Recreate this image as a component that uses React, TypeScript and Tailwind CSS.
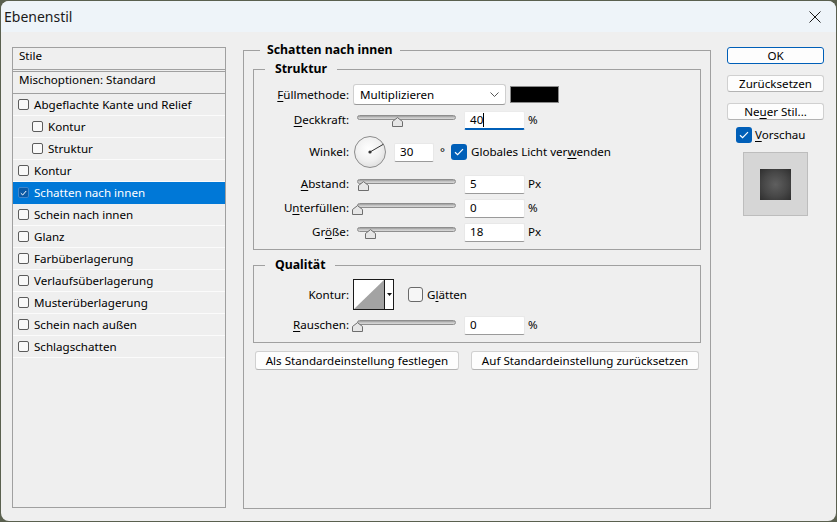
import React from "react";

function U({ children }: { children: React.ReactNode }) {
  return <span className="underline decoration-1 underline-offset-[2px]">{children}</span>;
}

function ListCheck({ selected }: { selected?: boolean }) {
  if (selected) {
    return (
      <div className="w-[11px] h-[11px] rounded-[2px] bg-[#0a5aa6] border border-[#3f86cc] flex items-center justify-center shrink-0">
        <svg width="7" height="6" viewBox="0 0 7 6">
          <path d="M0.8 3.2 L2.7 5 L6.2 1" fill="none" stroke="#ffffff" strokeWidth="1" />
        </svg>
      </div>
    );
  }
  return <div className="w-[11px] h-[11px] rounded-[2px] border border-[#5c5c5c] bg-[#f9f9f9] shrink-0" />;
}

function ListRow({ label, indent, selected }: { label: string; indent?: boolean; selected?: boolean }) {
  const base = "flex items-center h-[22px] border-b";
  const color = selected ? "bg-[#0078d7] text-white border-[#0078d7]" : "border-[#fbfbfb]";
  const pad = indent ? "pl-[19px]" : "pl-[5px]";
  return (
    <div className={`${base} ${color} ${pad}`}>
      <ListCheck selected={selected} />
      <span className="ml-[5px]">{label}</span>
    </div>
  );
}

function BlueCheck() {
  return (
    <div className="w-[16px] h-[16px] rounded-[3px] bg-[#005fb8] flex items-center justify-center shrink-0">
      <svg width="10" height="8" viewBox="0 0 10 8">
        <path d="M1 4.2 L3.6 6.6 L9 1.2" fill="none" stroke="#ffffff" strokeWidth="1.2" />
      </svg>
    </div>
  );
}

function Label({ children }: { children: React.ReactNode }) {
  return <div className="w-[95px] mr-[4px] text-right shrink-0">{children}</div>;
}

function Slider({ pos }: { pos: number }) {
  return (
    <div className="relative w-[107px] h-[24px] shrink-0">
      <div className="absolute left-[4px] right-[4px] top-[7px] h-[5px] rounded-full border border-[#8e8e8e] bg-gradient-to-b from-[#9c9c9c] via-[#c4c4c4] to-[#dadada]" />
      <svg className="absolute top-[9px]" style={{ left: 4 + pos - 5.5 }} width="11" height="10" viewBox="0 0 11 10">
        <path d="M0.5 9.5 L0.5 4.5 L5.5 0.6 L10.5 4.5 L10.5 9.5 Z" fill="#e6e6e6" stroke="#6e6e6e" strokeWidth="1" />
      </svg>
    </div>
  );
}

function Field({ value, focused, narrow }: { value: string; focused?: boolean; narrow?: boolean }) {
  const w = narrow ? "w-[40px]" : "w-[61px]";
  const b = focused
    ? "border-[#ebebeb] border-b-2 border-b-[#005fb8]"
    : "border-[#e8e8e8] border-b-[#9a9a9a]";
  return (
    <div className={`${w} h-[19px] bg-white border ${b} rounded-[2px] pl-[5px] flex items-center shrink-0`}>
      <span>{value}</span>
      {focused ? <span className="w-px h-[14px] bg-black" /> : null}
    </div>
  );
}

function SliderRow({ label, pos, value, unit, focused }: { label: React.ReactNode; pos: number; value: string; unit: string; focused?: boolean }) {
  return (
    <div className="flex items-center h-[24px]">
      <Label>{label}</Label>
      <Slider pos={pos} />
      <div className="ml-[4px]">
        <Field value={value} focused={focused} />
      </div>
      <span className="ml-[3px]">{unit}</span>
    </div>
  );
}

function Btn({ children, w, primary }: { children: React.ReactNode; w: string; primary?: boolean }) {
  const border = primary ? "border-[#005fb8]" : "border-[#d0d0d0] border-b-[#b3b3b3]";
  return (
    <div className={`${w} h-[17px] bg-[#fdfdfd] border ${border} rounded-[3px] flex items-center justify-center leading-none`}>
      {children}
    </div>
  );
}

export default function App() {
  return (
    <div className="w-[837px] h-[522px] bg-[#5a604f] p-[1px] font-['Noto_Sans','Open_Sans',sans-serif] text-[11.6px] text-black">
      <div className="w-full h-full rounded-[8px] overflow-hidden bg-[#efefef] flex flex-col">
        <div className="h-[31px] bg-[#eef4f9] flex items-center justify-between pl-[3px] pr-[15px] shrink-0">
          <span className="text-[14px] text-[#1a1a1a]">Ebenenstil</span>
          <svg width="12" height="12" viewBox="0 0 12 12">
            <path d="M0.5 0.5 L11.5 11.5 M11.5 0.5 L0.5 11.5" stroke="#1a1a1a" strokeWidth="1" />
          </svg>
        </div>

        <div className="flex items-start pl-[11px] pt-[10px]">
          {/* Left list */}
          <div className="mt-[5px] w-[214px] h-[461px] border border-[#a0a0a0] shrink-0">
            <div className="h-[22px] border-b border-[#a0a0a0] flex items-center pl-[6px] pb-[5px]">Stile</div>
            <div className="h-[2px] border-b border-[#a0a0a0]" />
            <div className="h-[22px] border-b border-[#a0a0a0] flex items-center pl-[6px] pb-[5px]">Mischoptionen: Standard</div>
            <ListRow label="Abgeflachte Kante und Relief" />
            <ListRow label="Kontur" indent />
            <ListRow label="Struktur" indent />
            <ListRow label="Kontur" />
            <ListRow label="Schatten nach innen" selected />
            <ListRow label="Schein nach innen" />
            <ListRow label="Glanz" />
            <ListRow label="Farbüberlagerung" />
            <ListRow label="Verlaufsüberlagerung" />
            <ListRow label="Musterüberlagerung" />
            <ListRow label="Schein nach außen" />
            <ListRow label="Schlagschatten" />
          </div>

          {/* Middle */}
          <fieldset className="ml-[17px] w-[468px] h-[467px] border border-[#a0a0a0] px-[9px] shrink-0">
            <legend className="ml-[7px] px-[7px] font-bold leading-[16px] text-[12.3px]">Schatten nach innen</legend>

            <fieldset className="mt-[3px] border border-[#a0a0a0] pt-[7px] pb-[5px]">
              <legend className="ml-[11px] px-[10px] font-bold leading-[16px] text-[12.3px]">Struktur</legend>

              <div className="flex items-center h-[21px]">
                <Label>
                  <U>F</U>üllmethode:
                </Label>
                <div className="w-[153px] h-[21px] bg-white border border-[#cfcfcf] border-b-[#9a9a9a] rounded-[3px] flex items-center justify-between pl-[6px] pr-[6px] shrink-0">
                  <span>Multiplizieren</span>
                  <svg width="9" height="5" viewBox="0 0 9 5">
                    <path d="M0.5 0.5 L4.5 4.5 L8.5 0.5" fill="none" stroke="#555" strokeWidth="1" />
                  </svg>
                </div>
                <div className="ml-[4px] w-[49px] h-[17px] bg-black border border-[#8a8a8a] shrink-0" />
              </div>

              <div className="mt-[3px]">
                <SliderRow label={<><U>D</U>eckkraft:</>} pos={40} value="40" unit="%" focused />
              </div>

              <div className="flex items-center h-[40px]">
                <Label>Winkel:</Label>
                <div className="relative ml-[1px] w-[32px] h-[32px] rounded-full border border-[#8c8c8c] bg-[radial-gradient(circle_at_45%_40%,#ffffff_0%,#f0f0f0_50%,#d2d2d2_100%)] shrink-0">
                  <svg className="absolute left-0 top-0" width="30" height="30" viewBox="0 0 30 30">
                    <line x1="15" y1="15" x2="28.5" y2="7.2" stroke="#333" strokeWidth="1" />
                    <circle cx="15" cy="15" r="1.6" fill="#333" />
                  </svg>
                </div>
                <div className="ml-[8px]">
                  <Field value="30" narrow />
                </div>
                <span className="ml-[6px]">°</span>
                <div className="ml-[6px]">
                  <BlueCheck />
                </div>
                <span className="ml-[4px]">
                  Globales Licht ver<U>w</U>enden
                </span>
              </div>

              <SliderRow label={<><U>A</U>bstand:</>} pos={6} value="5" unit="Px" />
              <SliderRow label={<>U<U>n</U>terfüllen:</>} pos={0} value="0" unit="%" />
              <SliderRow label={<>Gr<U>ö</U>ße:</>} pos={13.5} value="18" unit="Px" />
            </fieldset>

            <fieldset className="mt-[7px] border border-[#a0a0a0] pt-[6px] pb-[5px]">
              <legend className="ml-[11px] px-[10px] font-bold leading-[16px] text-[12.3px]">Qualität</legend>
              <div className="flex items-center h-[31px]">
                <Label>Kontur:</Label>
                <div className="w-[41px] h-[31px] border border-[#1a1a1a] bg-white flex shrink-0">
                  <svg width="30" height="29" viewBox="0 0 30 29" className="shrink-0">
                    <path d="M0 29 L30 0 L30 29 Z" fill="#a3a3a3" />
                  </svg>
                  <div className="flex-1 border-l border-[#1a1a1a] flex items-center justify-center">
                    <svg width="5" height="3" viewBox="0 0 5 3">
                      <path d="M0 0 L5 0 L2.5 3 Z" fill="#111" />
                    </svg>
                  </div>
                </div>
                <div className="ml-[14px] w-[15px] h-[15px] rounded-[3px] border border-[#6a6a6a] bg-[#f6f6f6] shrink-0" />
                <span className="ml-[4px]">
                  G<U>l</U>ätten
                </span>
              </div>
              <div className="mt-[3px]">
                <SliderRow label={<><U>R</U>auschen:</>} pos={0} value="0" unit="%" />
              </div>
            </fieldset>

            <div className="flex mt-[8px] pl-[2px]">
              <div className="w-[204px] h-[19px] bg-[#fdfdfd] border border-[#d0d0d0] border-b-[#b3b3b3] rounded-[3px] flex items-center justify-center">
                Als Standardeinstellung festlegen
              </div>
              <div className="ml-[12px] w-[228px] h-[19px] bg-[#fdfdfd] border border-[#d0d0d0] border-b-[#b3b3b3] rounded-[3px] flex items-center justify-center">
                Auf Standardeinstellung zurücksetzen
              </div>
            </div>
          </fieldset>

          {/* Right */}
          <div className="ml-[16px] mt-[5px] w-[97px] flex flex-col shrink-0">
            <Btn w="w-[97px]" primary>OK</Btn>
            <div className="mt-[11px]">
              <Btn w="w-[97px]">Zurücksetzen</Btn>
            </div>
            <div className="mt-[11px]">
              <Btn w="w-[97px]">
                Ne<U>u</U>er Stil...
              </Btn>
            </div>
            <div className="mt-[7px] h-[16px] flex items-center pl-[9px]">
              <BlueCheck />
              <span className="ml-[3px]">
                <U>V</U>orschau
              </span>
            </div>
            <div className="mt-[9px] self-center w-[65px] h-[64px] bg-[#d6d6d6] border border-[#bdbdbd] flex items-center justify-center">
              <div className="w-[31px] h-[31px] bg-[radial-gradient(circle,#5f5f5f_0%,#474747_55%,#2e2e2e_100%)]" />
            </div>
          </div>
        </div>
      </div>
    </div>
  );
}
